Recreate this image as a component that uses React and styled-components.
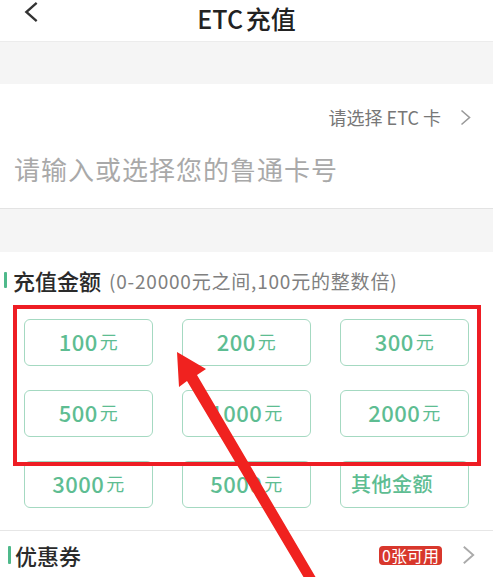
import styled, { createGlobalStyle } from "styled-components";

const GlobalStyle = createGlobalStyle`
  body {
    margin: 0;
    background: #fff;
    font-family: "Noto Sans CJK SC", "Noto Sans", sans-serif;
  }
`;

const AMOUNTS = ["100", "200", "300", "500", "1000", "2000", "3000", "5000"];

const Chevron = ({ dir = "right", w = 11, h = 17, color = "#999", sw = 1.6 }) => (
  <svg width={w} height={h} viewBox="0 0 11 17" fill="none">
    {dir === "right" ? (
      <path d="M1.5 1.5 L9.5 8.5 L1.5 15.5" stroke={color} strokeWidth={sw} />
    ) : (
      <path d="M9.5 1.5 L1.5 8.5 L9.5 15.5" stroke={color} strokeWidth={sw} />
    )}
  </svg>
);

const Recharge = () => {
  return (
    <Page>
      <Header>
        <Back>
          <Chevron dir="left" w={15} h={22} color="#333" sw={1.8} />
        </Back>
        <Title>ETC 充值</Title>
        <span />
      </Header>
      <Gap $top />
      <CardSection>
        <SelectRow>
          <span>请选择 ETC 卡</span>
          <Chevron />
        </SelectRow>
        <Placeholder>请输入或选择您的鲁通卡号</Placeholder>
      </CardSection>
      <Gap />
      <AmountSection>
        <SectionTitle>
          <Bar />
          <strong>充值金额</strong>
          <small>(0-20000元之间,100元的整数倍)</small>
        </SectionTitle>
        <Grid>
          {AMOUNTS.map((a) => (
            <AmountButton key={a}>
              {a}
              <Unit>元</Unit>
            </AmountButton>
          ))}
          <AmountButton $other>其他金额</AmountButton>
        </Grid>
        <Highlight />
      </AmountSection>
      <CouponRow>
        <SectionTitle $big>
          <Bar $tall />
          <strong>优惠券</strong>
        </SectionTitle>
        <CouponRight>
          <Badge>0张可用</Badge>
          <Chevron w={13} h={20} color="#aaa" />
        </CouponRight>
      </CouponRow>
      <ArrowLayer width="493" height="577" viewBox="0 0 493 577">
        <polygon
          points="177,352 206,369 197,375 322,588 313,593 187,381 179,387"
          fill="#f0221f"
        />
      </ArrowLayer>
    </Page>
  );
};

const Page = styled.div`
  position: relative;
  width: 493px;
  height: 577px;
  overflow: hidden;
  background: #fff;
`;

const Header = styled.header`
  height: 41px;
  display: grid;
  grid-template-columns: 1fr auto 1fr;
  align-items: start;
`;

const Back = styled.div`
  display: flex;
  padding: 1px 0 0 24px;
`;

const Title = styled.h1`
  margin: 3px 0 0;
  font-size: 25px;
  line-height: 30px;
  font-weight: 500;
  color: #222;
  word-spacing: -3px;
`;

const Gap = styled.div`
  height: ${(p) => (p.$top ? "42px" : "43px")};
  background: #f5f5f5;
  border-top: ${(p) => (p.$top ? "1px solid #ececec" : "none")};
`;

const CardSection = styled.section`
  padding: 17px 22px 15px 14px;
  border-bottom: 1px solid #e3e3e3;
`;

const SelectRow = styled.div`
  height: 32px;
  display: flex;
  justify-content: flex-end;
  align-items: center;
  gap: 19px;
  font-size: 18px;
  color: #777;
`;

const Placeholder = styled.div`
  margin-top: 16px;
  margin-bottom: 4px;
  height: 40px;
  line-height: 40px;
  font-size: 26px;
  letter-spacing: 1px;
  color: #a9a9a9;
`;

const AmountSection = styled.section`
  position: relative;
  padding: 16px 0 22px;
  border-bottom: 1px solid #e6e6e6;
`;

const SectionTitle = styled.div`
  display: flex;
  align-items: center;
  height: ${(p) => (p.$big ? "26px" : "24px")};
  padding-left: ${(p) => (p.$big ? "8px" : "4px")};

  strong {
    margin-left: ${(p) => (p.$big ? "4px" : "6px")};
    font-size: 22px;
    font-weight: 500;
    color: #2a2a2a;
  }

  small {
    margin-left: 8px;
    font-size: 19px;
    letter-spacing: 0.8px;
    color: #808080;
  }
`;

const Bar = styled.span`
  width: 3px;
  height: ${(p) => (p.$tall ? "18px" : "16px")};
  background: #4fb98b;
  border-radius: 1px;
`;

const Grid = styled.div`
  margin-top: 27px;
  padding-left: 24px;
  display: grid;
  grid-template-columns: repeat(3, 129px);
  grid-auto-rows: 47px;
  column-gap: 29px;
  row-gap: 24px;
`;

const AmountButton = styled.div`
  box-sizing: border-box;
  display: flex;
  align-items: center;
  border: 1.5px solid #a4d9c1;
  border-radius: 6px;
  color: #5ebd92;
  font-size: ${(p) => (p.$other ? "20px" : "22px")};
  font-weight: 500;
  letter-spacing: 0.5px;
  padding-bottom: 3px;
  justify-content: ${(p) => (p.$other ? "flex-start" : "center")};
  padding-left: ${(p) => (p.$other ? "10px" : "0")};
`;

const Unit = styled.span`
  margin-left: 2px;
  font-size: 18px;
  font-weight: 400;
`;

const Highlight = styled.div`
  position: absolute;
  left: 13px;
  top: 53px;
  width: 468px;
  height: 161px;
  box-sizing: border-box;
  border: 4px solid #ee1d24;
  pointer-events: none;
`;

const CouponRow = styled.section`
  display: flex;
  align-items: center;
  justify-content: space-between;
  padding: 11px 18px 0 0;
`;

const CouponRight = styled.div`
  display: flex;
  align-items: center;
  gap: 20px;
`;

const Badge = styled.span`
  background: #d8372c;
  color: #fff;
  font-size: 16px;
  line-height: 19px;
  padding: 0 3px;
  border-radius: 4px;
`;

const ArrowLayer = styled.svg`
  position: absolute;
  left: 0;
  top: 0;
  pointer-events: none;
`;

export default function App() {
  return (
    <>
      <GlobalStyle />
      <Recharge />
    </>
  );
}
